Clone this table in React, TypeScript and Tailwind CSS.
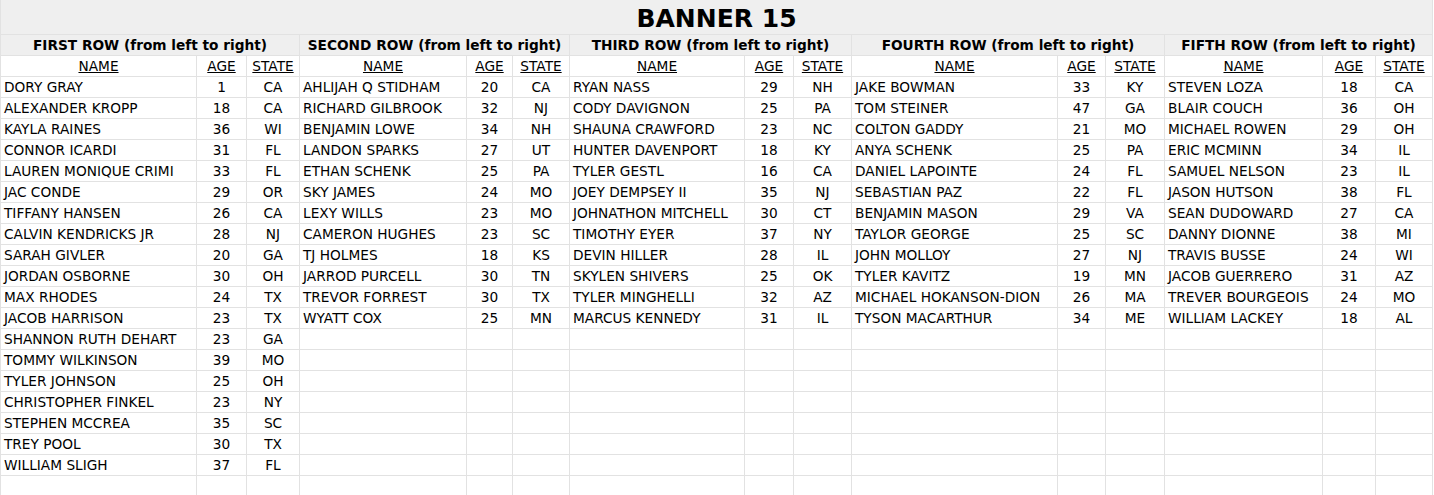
import React from 'react';

type Person = [string, string, string];

const groups: { title: string; people: Person[] }[] = [
  {
    title: 'FIRST ROW (from left to right)',
    people: [
      ['DORY GRAY', '1', 'CA'],
      ['ALEXANDER KROPP', '18', 'CA'],
      ['KAYLA RAINES', '36', 'WI'],
      ['CONNOR ICARDI', '31', 'FL'],
      ['LAUREN MONIQUE CRIMI', '33', 'FL'],
      ['JAC CONDE', '29', 'OR'],
      ['TIFFANY HANSEN', '26', 'CA'],
      ['CALVIN KENDRICKS JR', '28', 'NJ'],
      ['SARAH GIVLER', '20', 'GA'],
      ['JORDAN OSBORNE', '30', 'OH'],
      ['MAX RHODES', '24', 'TX'],
      ['JACOB HARRISON', '23', 'TX'],
      ['SHANNON RUTH DEHART', '23', 'GA'],
      ['TOMMY WILKINSON', '39', 'MO'],
      ['TYLER JOHNSON', '25', 'OH'],
      ['CHRISTOPHER FINKEL', '23', 'NY'],
      ['STEPHEN MCCREA', '35', 'SC'],
      ['TREY POOL', '30', 'TX'],
      ['WILLIAM SLIGH', '37', 'FL'],
    ],
  },
  {
    title: 'SECOND ROW (from left to right)',
    people: [
      ['AHLIJAH Q STIDHAM', '20', 'CA'],
      ['RICHARD GILBROOK', '32', 'NJ'],
      ['BENJAMIN LOWE', '34', 'NH'],
      ['LANDON SPARKS', '27', 'UT'],
      ['ETHAN SCHENK', '25', 'PA'],
      ['SKY JAMES', '24', 'MO'],
      ['LEXY WILLS', '23', 'MO'],
      ['CAMERON HUGHES', '23', 'SC'],
      ['TJ HOLMES', '18', 'KS'],
      ['JARROD PURCELL', '30', 'TN'],
      ['TREVOR FORREST', '30', 'TX'],
      ['WYATT COX', '25', 'MN'],
    ],
  },
  {
    title: 'THIRD ROW (from left to right)',
    people: [
      ['RYAN NASS', '29', 'NH'],
      ['CODY DAVIGNON', '25', 'PA'],
      ['SHAUNA CRAWFORD', '23', 'NC'],
      ['HUNTER DAVENPORT', '18', 'KY'],
      ['TYLER GESTL', '16', 'CA'],
      ['JOEY DEMPSEY II', '35', 'NJ'],
      ['JOHNATHON MITCHELL', '30', 'CT'],
      ['TIMOTHY EYER', '37', 'NY'],
      ['DEVIN HILLER', '28', 'IL'],
      ['SKYLEN SHIVERS', '25', 'OK'],
      ['TYLER MINGHELLI', '32', 'AZ'],
      ['MARCUS KENNEDY', '31', 'IL'],
    ],
  },
  {
    title: 'FOURTH ROW (from left to right)',
    people: [
      ['JAKE BOWMAN', '33', 'KY'],
      ['TOM STEINER', '47', 'GA'],
      ['COLTON GADDY', '21', 'MO'],
      ['ANYA SCHENK', '25', 'PA'],
      ['DANIEL LAPOINTE', '24', 'FL'],
      ['SEBASTIAN PAZ', '22', 'FL'],
      ['BENJAMIN MASON', '29', 'VA'],
      ['TAYLOR GEORGE', '25', 'SC'],
      ['JOHN MOLLOY', '27', 'NJ'],
      ['TYLER KAVITZ', '19', 'MN'],
      ['MICHAEL HOKANSON-DION', '26', 'MA'],
      ['TYSON MACARTHUR', '34', 'ME'],
    ],
  },
  {
    title: 'FIFTH ROW (from left to right)',
    people: [
      ['STEVEN LOZA', '18', 'CA'],
      ['BLAIR COUCH', '36', 'OH'],
      ['MICHAEL ROWEN', '29', 'OH'],
      ['ERIC MCMINN', '34', 'IL'],
      ['SAMUEL NELSON', '23', 'IL'],
      ['JASON HUTSON', '38', 'FL'],
      ['SEAN DUDOWARD', '27', 'CA'],
      ['DANNY DIONNE', '38', 'MI'],
      ['TRAVIS BUSSE', '24', 'WI'],
      ['JACOB GUERRERO', '31', 'AZ'],
      ['TREVER BOURGEOIS', '24', 'MO'],
      ['WILLIAM LACKEY', '18', 'AL'],
    ],
  },
];

const ROWS = 20;

const cell = 'h-[21px] border-r border-b border-[#e2e2e2] leading-[20px] whitespace-nowrap overflow-hidden';

const App = () => {
  return (
    <div className="bg-white min-h-screen text-[13.7px] text-black" style={{ fontFamily: '"DejaVu Sans", Verdana, sans-serif' }}>
      <div className="grid w-[1433px] border-l border-[#e2e2e2] grid-cols-[196px_50px_53px_167px_46px_57px_175px_49px_58px_206px_48px_59px_158px_53px_57px]">
        {/* title */}
        <div className="col-span-15 h-[35px] bg-[#efefef] border-r border-b border-[#e2e2e2] flex items-center justify-center pt-[3px] text-[25px] font-bold">
          BANNER 15
        </div>

        {/* group headers */}
        {groups.map((g) => (
          <div key={g.title} className={`col-span-3 bg-[#efefef] font-bold text-center ${cell}`}>
            {g.title}
          </div>
        ))}

        {/* column headers */}
        {groups.map((g) => (
          <React.Fragment key={g.title + '-h'}>
            <div className={`text-center underline ${cell}`}>NAME</div>
            <div className={`text-center underline ${cell}`}>AGE</div>
            <div className={`text-center underline ${cell}`}>STATE</div>
          </React.Fragment>
        ))}

        {/* rows */}
        {Array.from({ length: ROWS }).map((_, i) =>
          groups.map((g, j) => {
            const p = g.people[i];
            return (
              <React.Fragment key={`${i}-${j}`}>
                <div className={`pl-[3px] ${cell}`}>{p ? p[0] : ''}</div>
                <div className={`text-center ${cell}`}>{p ? p[1] : ''}</div>
                <div className={`text-center ${cell}`}>{p ? p[2] : ''}</div>
              </React.Fragment>
            );
          })
        )}
      </div>
    </div>
  );
};

export default App;
